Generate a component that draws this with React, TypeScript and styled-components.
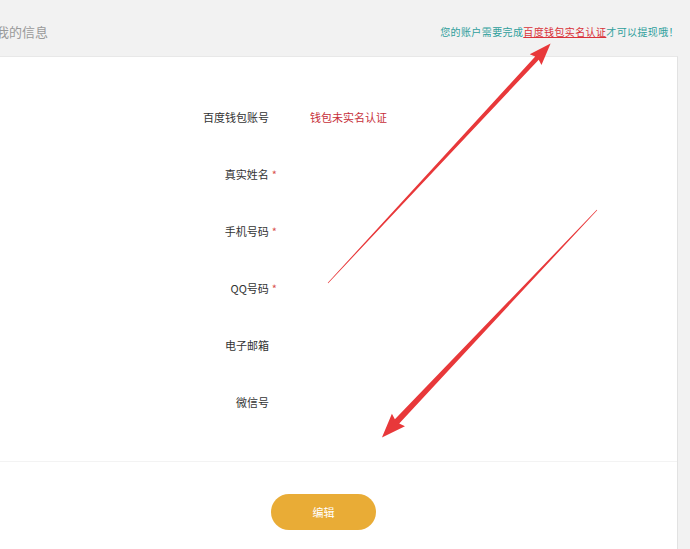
import React from 'react';
import styled, { createGlobalStyle } from 'styled-components';

const GlobalStyle = createGlobalStyle`
  html, body {
    margin: 0;
    padding: 0;
    background: #f2f2f2;
    font-family: "Noto Sans CJK SC", "Noto Sans", sans-serif;
  }
`;

const Page = styled.div`
  position: relative;
  width: 690px;
  height: 549px;
  overflow: hidden;
  display: flex;
  flex-direction: column;
`;

const Header = styled.div`
  height: 56px;
  flex: none;
  display: flex;
  align-items: center;
  justify-content: space-between;
  padding: 7px 11px 0 0;
  box-sizing: border-box;
`;

const Title = styled.h2`
  margin: 0 0 0 -4px;
  font-size: 13px;
  font-weight: normal;
  color: #9a9a9a;
`;

const Notice = styled.div`
  font-size: 10px;
  color: #2f9f9c;
  letter-spacing: 0.38px;
`;

const NoticeLink = styled.a`
  color: #d9333a;
  text-decoration: underline;
  text-underline-offset: 1px;
`;

const Panel = styled.div`
  flex: 1;
  margin-right: 12px;
  background: #fff;
  border-top: 1px solid #e8e8e8;
  border-right: 1px solid #e2e2e2;
`;

const Form = styled.div`
  padding: 31px 0 31px;
  border-bottom: 1px solid #f3f3f3;
`;

const Row = styled.div`
  height: 57px;
  display: grid;
  grid-template-columns: 269px 1fr;
  column-gap: 41px;
  align-items: center;
  font-size: 11px;
`;

const Label = styled.div`
  text-align: right;
  color: #333;
`;

const Required = styled.span`
  color: #d9534f;
  margin-left: 3px;
  margin-right: -8px;
`;

const Value = styled.div<{ $warn?: boolean }>`
  color: ${p => (p.$warn ? '#c72f3a' : '#333')};
`;

const Footer = styled.div`
  display: flex;
  justify-content: flex-start;
  padding: 32px 0 0 271px;
`;

const EditButton = styled.button`
  width: 105px;
  height: 36px;
  border: none;
  border-radius: 18px;
  background: #e9ac36;
  color: #fff;
  font-family: inherit;
  font-size: 11px;
  cursor: pointer;
`;

const Overlay = styled.svg`
  position: absolute;
  left: 0;
  top: 0;
  pointer-events: none;
`;

interface Field {
  label: string;
  required?: boolean;
  value?: string;
  warn?: boolean;
}

const fields: Field[] = [
  { label: '百度钱包账号', value: '钱包未实名认证', warn: true },
  { label: '真实姓名', required: true },
  { label: '手机号码', required: true },
  { label: 'QQ号码', required: true },
  { label: '电子邮箱' },
  { label: '微信号' },
];

function Arrow ({ x, y, angle, len, w, head, hw }: { x: number; y: number; angle: number; len: number; w: number; head: number; hw: number }) {
  const b = len - head;
  return (
    <g transform={`translate(${x} ${y}) rotate(${angle})`}>
      <polygon
        fill='#e8383a'
        points={`0,-0.3 ${b},${-w} ${b - 2},${-hw} ${len},0 ${b - 2},${hw} ${b},${w} 0,0.3`}
      />
    </g>
  );
}

export default function App () {
  return (
    <Page>
      <GlobalStyle />
      <Header>
        <Title>我的信息</Title>
        <Notice>
          您的账户需要完成<NoticeLink>百度钱包实名认证</NoticeLink>才可以提现哦！
        </Notice>
      </Header>
      <Panel>
        <Form>
          {fields.map(f => (
            <Row key={f.label}>
              <Label>
                {f.label}
                {f.required && <Required>*</Required>}
              </Label>
              <Value $warn={f.warn}>{f.value}</Value>
            </Row>
          ))}
        </Form>
        <Footer>
          <EditButton>编辑</EditButton>
        </Footer>
      </Panel>
      <Overlay width='690' height='549' viewBox='0 0 690 549'>
        <Arrow x={328} y={283} angle={-47.1} len={327} w={2.4} head={20} hw={8} />
        <Arrow x={597} y={210} angle={133.4} len={313} w={3} head={22} hw={9} />
      </Overlay>
    </Page>
  );
}
